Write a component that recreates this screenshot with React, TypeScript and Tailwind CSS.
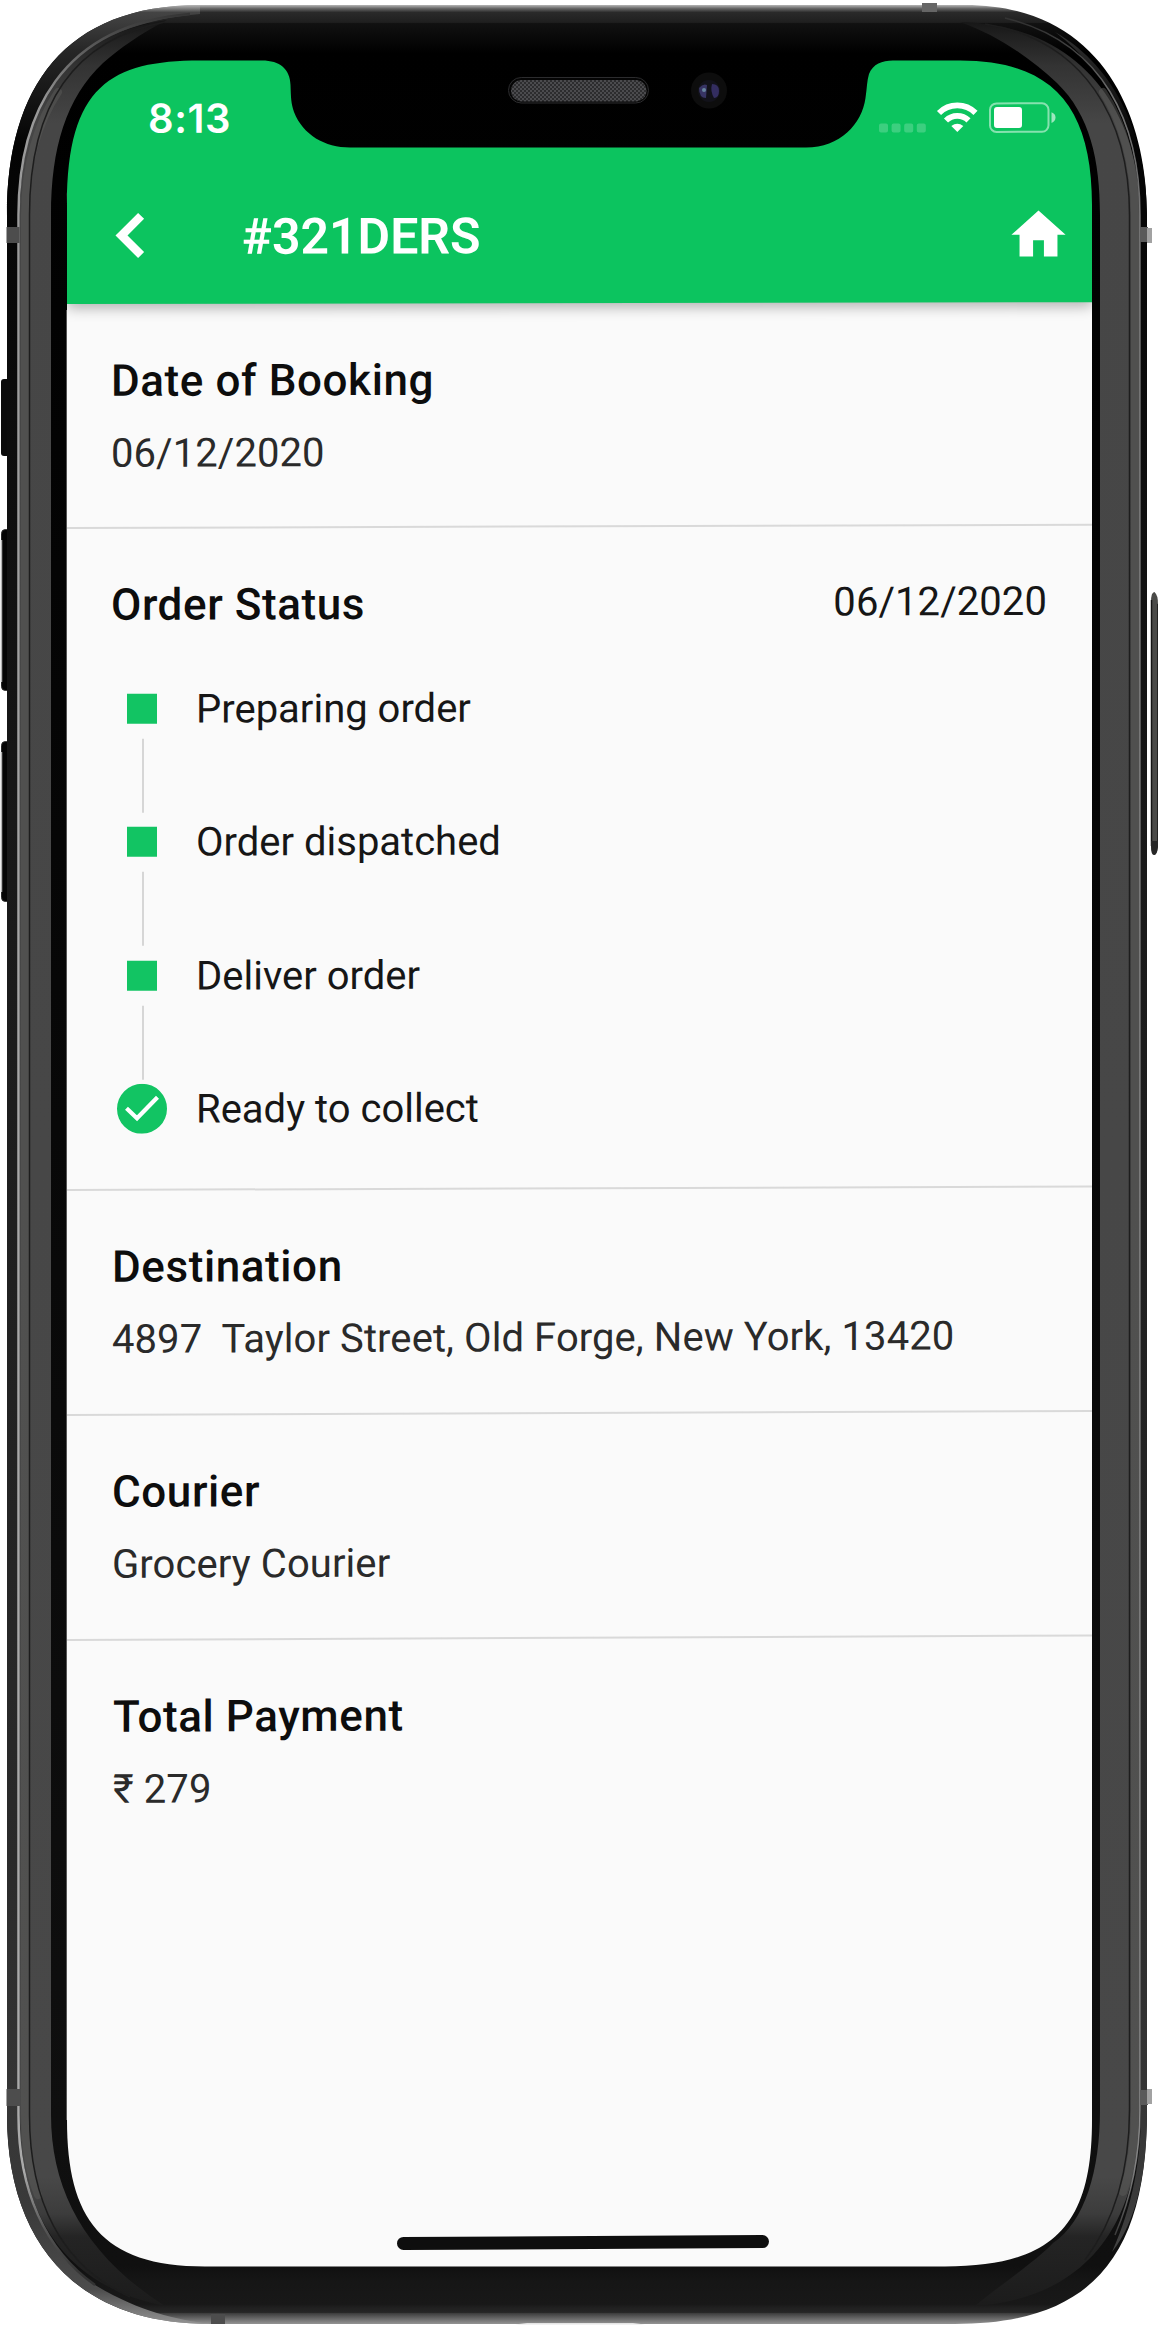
import React from "react";

const OUTER =
  "M7 215C7 87 65 5 200 5H965C1101 5 1147 114 1147 215V2110C1147 2254 1094 2324 955 2324H210C73 2324 7 2239 7 2115Z";
const SCREEN =
  "M67 205C67 86 111 60.500 200 60.500H262C280 60.500 290 69 290.500 85C291 98 291 103 294 112C303 135 325 147.500 350 147.500H806C840 147.500 862 124 865.500 98C867 88 867 80 869 74C873 64 882 60.500 893 60.500H960C1053 60.500 1092 107 1092 205V2120C1092 2223 1056 2266.500 945 2266.500H205C101 2266.500 67 2218 67 2120Z";

function PhoneFrame() {
  return (
    <svg className="pointer-events-none absolute inset-0 z-10" width="1159" height="2326" viewBox="0 0 1159 2326" aria-hidden="true">
      <defs>
        <linearGradient id="body" x1="0" y1="5" x2="0" y2="2324" gradientUnits="userSpaceOnUse">
          <stop offset="0" stopColor="#b5b5b5" />
          <stop offset="0.0015" stopColor="#666" />
          <stop offset="0.0032" stopColor="#2a2a2a" />
          <stop offset="0.0075" stopColor="#1f1f1f" />
          <stop offset="0.008" stopColor="#111" />
          <stop offset="0.021" stopColor="#000" />
          <stop offset="0.3" stopColor="#050505" />
          <stop offset="0.975" stopColor="#101010" />
          <stop offset="0.982" stopColor="#161616" />
          <stop offset="0.9915" stopColor="#181818" />
          <stop offset="0.993" stopColor="#202020" />
          <stop offset="0.995" stopColor="#262626" />
          <stop offset="0.9955" stopColor="#404040" />
          <stop offset="1" stopColor="#939393" />
        </linearGradient>
        <linearGradient id="side" x1="0" y1="20" x2="0" y2="2310" gradientUnits="userSpaceOnUse">
          <stop offset="0" stopColor="#161616" />
          <stop offset="0.02" stopColor="#333" />
          <stop offset="0.045" stopColor="#464646" />
          <stop offset="0.942" stopColor="#484848" />
          <stop offset="0.958" stopColor="#3c3c3c" />
          <stop offset="0.968" stopColor="#242424" />
          <stop offset="1" stopColor="#1b1b1b" />
        </linearGradient>
        <linearGradient id="edge" x1="0" y1="12" x2="0" y2="2310" gradientUnits="userSpaceOnUse">
          <stop offset="0" stopColor="#333" />
          <stop offset="0.04" stopColor="#999" />
          <stop offset="0.5" stopColor="#a8a8a8" />
          <stop offset="0.94" stopColor="#aaa" />
          <stop offset="0.965" stopColor="#555" />
          <stop offset="0.985" stopColor="#333" />
        </linearGradient>
        <linearGradient id="rim" x1="0" y1="5" x2="0" y2="2324" gradientUnits="userSpaceOnUse">
          <stop offset="0" stopColor="#b5b5b5" />
          <stop offset="0.0032" stopColor="#444" />
          <stop offset="0.02" stopColor="#262626" />
          <stop offset="0.06" stopColor="#040404" />
          <stop offset="0.35" stopColor="#181818" />
          <stop offset="0.8" stopColor="#2a2a2a" />
          <stop offset="0.95" stopColor="#3a3a3a" />
          <stop offset="0.985" stopColor="#4c4c4c" />
          <stop offset="1" stopColor="#939393" />
        </linearGradient>
        <pattern id="mesh" width="4" height="4" patternUnits="userSpaceOnUse">
          <rect width="4" height="4" fill="#2c2c2e" />
          <path d="M0 0h2v2H0zM2 2h2v2H2z" fill="#4b4b4e" />
        </pattern>
      </defs>

      <g>
        <rect x="1" y="379" width="10" height="77" rx="3" fill="#0b0b0b" />
        <rect x="1.500" y="529.500" width="9" height="161" rx="4" fill="#050505" stroke="#2a2a2a" />
        <rect x="1.500" y="741.500" width="9" height="160" rx="4" fill="#050505" stroke="#2a2a2a" />
        <path d="M1.500 540V682M1.500 752V892" stroke="#b5b5b5" strokeWidth="1.500" />
        <path d="M1151 602Q1151 592 1154.500 592Q1158 595 1158 604V846Q1157 855 1154 855Q1151 852 1151 843Z" fill="#4a4a48" />
        <path d="M1151.500 600V846" stroke="#141414" strokeWidth="1.500" />
        <path d="M1157.500 604V842" stroke="#222" />
        <path d="M1151 841h7v6q-1 8-4 8t-3-9z" fill="#262626" />
      </g>

      <path fillRule="evenodd" fill="url(#body)" d={OUTER + SCREEN} />
      <path
        fill="url(#rim)"
        d="M7 2115V215C7 87 65 5 200 5V14C60 25 18.500 115 18.500 215V2115C18.500 2190 45 2250 95 2285C140 2312 175 2319 210 2324C73 2324 7 2239 7 2115Z"
      />
      <path
        fill="url(#rim)"
        d="M1055 32C1118 68 1147 140 1147 215V2110C1147 2175 1136 2222 1112 2252C1133 2205 1141 2160 1141 2110V215C1141 140 1112 75 1055 32Z"
      />
      {/* polished side bands */}
      <path
        fill="url(#side)"
        d="M20 215C20 105 65 35 167 20C140 34 120 48 103 63C66 98 51 148 51 215V2115C51 2190 85 2255 165 2306C60 2285 20 2210 20 2115Z"
      />
      <path
        fill="url(#side)"
        d="M1140 215C1140 110 1080 25 960 22C1000 36 1032 60 1057 83C1090 115 1100 160 1100 215V2110C1100 2170 1085 2222 1053 2243C1035 2262 1000 2285 975 2306C1090 2298 1140 2220 1140 2110Z"
      />
      <path
        fill="none"
        stroke="#5a5a58"
        strokeWidth="8"
        strokeLinecap="round"
        opacity="0.500"
        d="M25 2115V215C25 165 38 122 58 92M1135 2110V215C1135 165 1123 122 1103 92M25 2115C25 2150 30 2175 38 2195M1135 2110C1135 2145 1131 2170 1123 2192"
      />
      <path fill="none" stroke="#1d1d1d" strokeWidth="1.500" d="M165 22C70 40 29.500 110 29.500 215V2115C29.500 2200 60 2265 130 2297M985 24C1085 40 1129.500 120 1129.500 215V2110C1129.500 2170 1115 2220 1085 2260" />
      <path fill="none" stroke="url(#edge)" strokeWidth="2.500" d="M190 14C60 25 18.500 115 18.500 215V2115C18.500 2190 45 2250 95 2285" />
      <path fill="none" stroke="url(#edge)" strokeWidth="1.500" opacity="0.700" d="M1005 18C1105 42 1140 125 1140 215V2110C1140 2160 1130 2200 1115 2235" />
      <path d="M66.500 310V2120" stroke="#777" strokeWidth="1" opacity="0.700" />

      {/* antenna bands */}
      <path fill="#4d4d4d" d="M6.500 227h13v16h-13zM6.500 2089h14v17h-14zM211 2314h14v10h-14z" />
      <path fill="#666" d="M922 3h15v9h-15z" />
      <path fill="#5a5a5a" d="M1140 227h8v15h-8zM1140 2090h8v15h-8z" />
      <path fill="#a2a2a2" d="M1147 228h5v15h-5zM1147 2089h5v15h-5z" />
      <path fill="#e4e4e4" d="M515 2324.500l12-1.500h106l12 1.500z" />

      {/* speaker and front camera */}
      <rect x="508.500" y="77.500" width="140" height="25.500" rx="12.700" fill="#050505" stroke="#2c2c2e" />
      <rect x="511" y="80" width="135.500" height="21.500" rx="10.700" fill="url(#mesh)" />
      <circle cx="709" cy="90.500" r="18" fill="#0d0d0d" />
      <circle cx="709" cy="91" r="11" fill="#12121a" />
      <path d="M699 88q4-5 8-3l-1 13q-7 0-7-10z" fill="#373464" />
      <path d="M712 84q7 0 7 7t-5 7q-4-7-2-14z" fill="#332d60" />
      <circle cx="704" cy="90" r="2" fill="#6785a0" />
    </svg>
  );
}

function StatusIcons() {
  return (
    <svg width="180" height="32" viewBox="878 101 180 32" aria-hidden="true">
      <g fill="#fff" opacity="0.200">
        <rect x="879" y="123" width="9" height="9" rx="2" />
        <rect x="891.600" y="123" width="9" height="9" rx="2" />
        <rect x="904.200" y="123" width="9" height="9" rx="2" />
        <rect x="916.800" y="123" width="9" height="9" rx="2" />
      </g>
      <g fill="none" stroke="#fff" strokeWidth="5.800">
        <path d="M939 112.500a26 26 0 0 1 36.500 0" />
        <path d="M946 120a16 16 0 0 1 22.500 0" />
      </g>
      <path d="M957.300 131.500l-6-6q6-4.500 12 0z" fill="#fff" />
      <rect x="990" y="103" width="58.500" height="28.500" rx="6.500" fill="none" stroke="#fff" strokeOpacity="0.500" strokeWidth="2" />
      <rect x="994" y="106.700" width="28" height="21" rx="3" fill="#fff" />
      <path d="M1051.500 112q4 1.500 4 5.300t-4 5.400z" fill="#fff" opacity="0.600" />
    </svg>
  );
}

function BackIcon() {
  return (
    <svg width="30" height="46" viewBox="0 0 30 46" aria-hidden="true">
      <path d="M23.100 0l6 6L12.500 22.600l16.600 16.600-6 6L.5 22.600z" fill="#fff" />
    </svg>
  );
}

function HomeIcon() {
  return (
    <svg width="65" height="65" viewBox="0 0 24 24" aria-hidden="true">
      <path d="M10 20v-6h4v6h5v-8h3L12 3 2 12h3v8z" fill="#fff" />
    </svg>
  );
}

function Section({ title, children, className }: { title: string; children: React.ReactNode; className: string }) {
  return (
    <section className={`flex origin-left flex-col gap-[23px] ${className}`}>
      <h2 className="text-[44px] leading-[50px] font-medium tracking-[0.58px] text-[#0d0d0d]">{title}</h2>
      <p className="text-[40px] leading-[50px] tracking-[0.08px] whitespace-pre text-[#2a2a2a]">{children}</p>
    </section>
  );
}

const STEPS = ["Preparing order", "Order dispatched", "Deliver order", "Ready to collect"];

function Step({ label, done }: { label: string; done: boolean }) {
  return (
    <li className="flex h-[133.4px] gap-[29px]">
      <div className="flex w-[51px] flex-col items-center">
        {done ? (
          <svg width="50" height="50" viewBox="0 0 50 50" aria-hidden="true">
            <circle cx="25" cy="25" r="25" fill="#12c463" />
            <path d="M9.500 24.500L20 34.500L40.500 13.500" fill="none" stroke="#fff" strokeWidth="4.200" />
          </svg>
        ) : (
          <>
            <div className="mt-[10px] size-[30px] bg-[#12c463]" />
            <div className="mt-[15px] ml-[3px] h-[74px] w-[2px] bg-[#d6d6d6]" />
          </>
        )}
      </div>
      <span className="text-[40px] leading-[51px] text-[#161616]">{label}</span>
    </li>
  );
}

export default function App() {
  return (
    <main className="relative flex h-[2326px] w-[1159px] overflow-hidden bg-white pt-[56px] pl-[67px] font-['Roboto',sans-serif]">
      <PhoneFrame />
      <div className="flex h-[2211px] w-[1025px] flex-col overflow-hidden bg-[#fafafa]">
        <header className="relative z-1 h-[248px] origin-left -skew-y-[0.1deg] bg-[#0cc45f] pt-[4px] text-white shadow-[0_4px_14px_rgba(0,0,0,0.3)]">
          <div className="flex h-[118px] items-center justify-between pr-[34px] pl-[81px]">
            <span className="font-['Inter',sans-serif] text-[40px] leading-[40px] font-semibold tracking-[0.6px]">8:13</span>
            <StatusIcons />
          </div>
          <div className="flex h-[116px] items-center pr-[21px] pl-[48px]">
            <BackIcon />
            <h1 className="ml-[97px] pt-[2px] text-[50px] leading-[60px] font-semibold">#321DERS</h1>
            <span className="ml-auto">
              <HomeIcon />
            </span>
          </div>
        </header>

        <Section title="Date of Booking" className="h-[225px] -skew-y-[0.18deg] border-b-2 border-[#d9d9d9] pt-[51.5px] pl-[44px]">
          06/12/2020
        </Section>

        <section className="h-[661.5px] origin-left -skew-y-[0.19deg] border-b-2 border-[#d9d9d9] pt-[51px] pl-[44px]">
          <div className="flex items-start justify-between pr-[45px]">
            <h2 className="text-[44px] leading-[50px] font-medium tracking-[0.58px] text-[#0d0d0d]">Order Status</h2>
            <time className="text-[40px] leading-[50px] tracking-[0.08px] text-[#161616]">06/12/2020</time>
          </div>
          <ul className="mt-[54px] ml-[5px]">
            {STEPS.map((label, i) => (
              <Step key={label} label={label} done={i === STEPS.length - 1} />
            ))}
          </ul>
        </section>

        <Section title="Destination" className="h-[225px] -skew-y-[0.23deg] border-b-2 border-[#d9d9d9] pt-[51px] pl-[45px]">
          {"4897  Taylor Street, Old Forge, New York, 13420"}
        </Section>
        <Section title="Courier" className="h-[225px] -skew-y-[0.25deg] border-b-2 border-[#d9d9d9] pt-[51px] pl-[45px]">
          Grocery Courier
        </Section>
        <Section title="Total Payment" className="-skew-y-[0.26deg] pt-[51px] pl-[46px]">
          ₹ 279
        </Section>

        <div className="mt-auto mb-[18px] ml-[330px] h-[13px] w-[372px] -rotate-[0.3deg] rounded-full bg-[#0e0e0e]" />
      </div>
    </main>
  );
}
